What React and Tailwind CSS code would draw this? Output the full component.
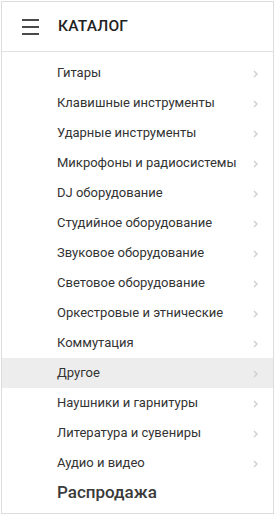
const items = [
  'Гитары',
  'Клавишные инструменты',
  'Ударные инструменты',
  'Микрофоны и радиосистемы',
  'DJ оборудование',
  'Студийное оборудование',
  'Звуковое оборудование',
  'Световое оборудование',
  'Оркестровые и этнические',
  'Коммутация',
  'Другое',
  'Наушники и гарнитуры',
  'Литература и сувениры',
  'Аудио и видео',
];

const Chevron = () => (
  <svg width="5" height="8" viewBox="0 0 5 8" fill="none" className="flex-shrink-0 mt-[1px]">
    <path d="M1 1l3 3-3 3" stroke="#cfcfcf" strokeWidth="1.4" />
  </svg>
);

export default function App() {
  return (
    <div className="w-[275px] h-[516px] bg-white p-px pb-[2px] font-['Roboto',sans-serif]">
      <div className="h-full border border-[#dcdcdc] flex flex-col">
        {/* Header */}
        <div className="h-[50px] flex items-center border-b border-[#e2e2e2] pl-[20px] flex-shrink-0">
          <div className="w-[17px] flex flex-col gap-[5px]">
            <div className="h-[2px] bg-[#4a4a4a]" />
            <div className="h-[2px] bg-[#4a4a4a]" />
            <div className="h-[2px] bg-[#4a4a4a]" />
          </div>
          <span className="ml-[19px] text-[15.5px] font-medium text-[#222] tracking-[0.2px]">КАТАЛОГ</span>
        </div>

        {/* List */}
        <nav className="pt-[6px] flex flex-col">
          {items.map((label) => (
            <div
              key={label}
              className={`h-[30px] flex items-center justify-between pl-[55px] pr-[15px] ${
                label === 'Другое' ? 'bg-[#ededed]' : ''
              }`}
            >
              <span className="text-[13px] text-[#333]">{label}</span>
              <Chevron />
            </div>
          ))}
          <div className="h-[30px] flex items-center pl-[55px]">
            <span className="text-[17px] font-medium text-[#3a3a3a]">Распродажа</span>
          </div>
        </nav>
      </div>
    </div>
  );
}
